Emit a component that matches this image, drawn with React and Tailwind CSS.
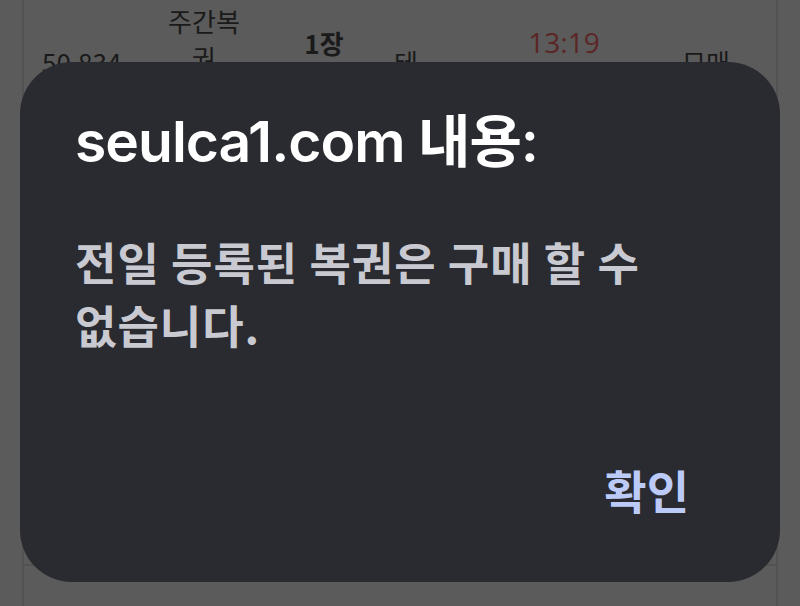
import React from 'react';

const KR = { fontFamily: '"Noto Sans CJK KR", "Noto Sans", sans-serif' };
const TITLE = { fontFamily: 'Inter, "Noto Sans CJK KR", sans-serif' };

const App = () => {
  return (
    <div className="relative w-[800px] h-[606px] overflow-hidden bg-[#5b5b5b]" style={KR}>
      {/* page behind the dialog */}
      <div className="mx-[22px] h-full border-x-2 border-[#525252] flex flex-col">
        <div className="relative h-[566px] border-b-2 border-[#525252] text-[#1a1a1a]">
          <div className="flex items-start text-[26px] leading-[37px]">
            <div className="w-[120px] pl-[18px] pt-[43px]">50,834</div>
            <div className="w-[120px] text-center pt-[2px]">
              주간복
              <br />권
            </div>
            <div className="w-[120px] text-center pt-[24px] font-bold">1장</div>
            <div className="w-[110px] pl-[10px] pt-[43px]">테</div>
            <div className="w-[140px] text-center pt-[24px] text-[28px] text-[#5a2626]" style={{ fontFamily: '"Open Sans", sans-serif' }}>
              13:19
            </div>
            <div className="flex-1 pl-[48px] pt-[43px]">모매</div>
          </div>
        </div>
      </div>

      {/* alert dialog */}
      <div className="absolute left-[20px] top-[62px] w-[760px] h-[520px] rounded-[52px] bg-[#2a2b30] flex flex-col px-[55px]">
        <h1 className="pt-[47px] text-[57px] leading-[66px] font-semibold text-white tracking-[-1px]" style={TITLE}>
          seulca1.com 내용:
        </h1>
        <p className="mt-[55px] text-[45px] leading-[63px] font-bold tracking-[1px] text-[#c9cad1] break-keep" style={KR}>
          전일 등록된 복권은 구매 할 수 없습니다.
        </p>
        <div className="mt-auto mb-[65px] flex justify-end pr-[36px]">
          <button className="text-[46px] leading-[56px] font-bold text-[#bccaf7]" style={KR}>
            확인
          </button>
        </div>
      </div>
    </div>
  );
};

export default App;
